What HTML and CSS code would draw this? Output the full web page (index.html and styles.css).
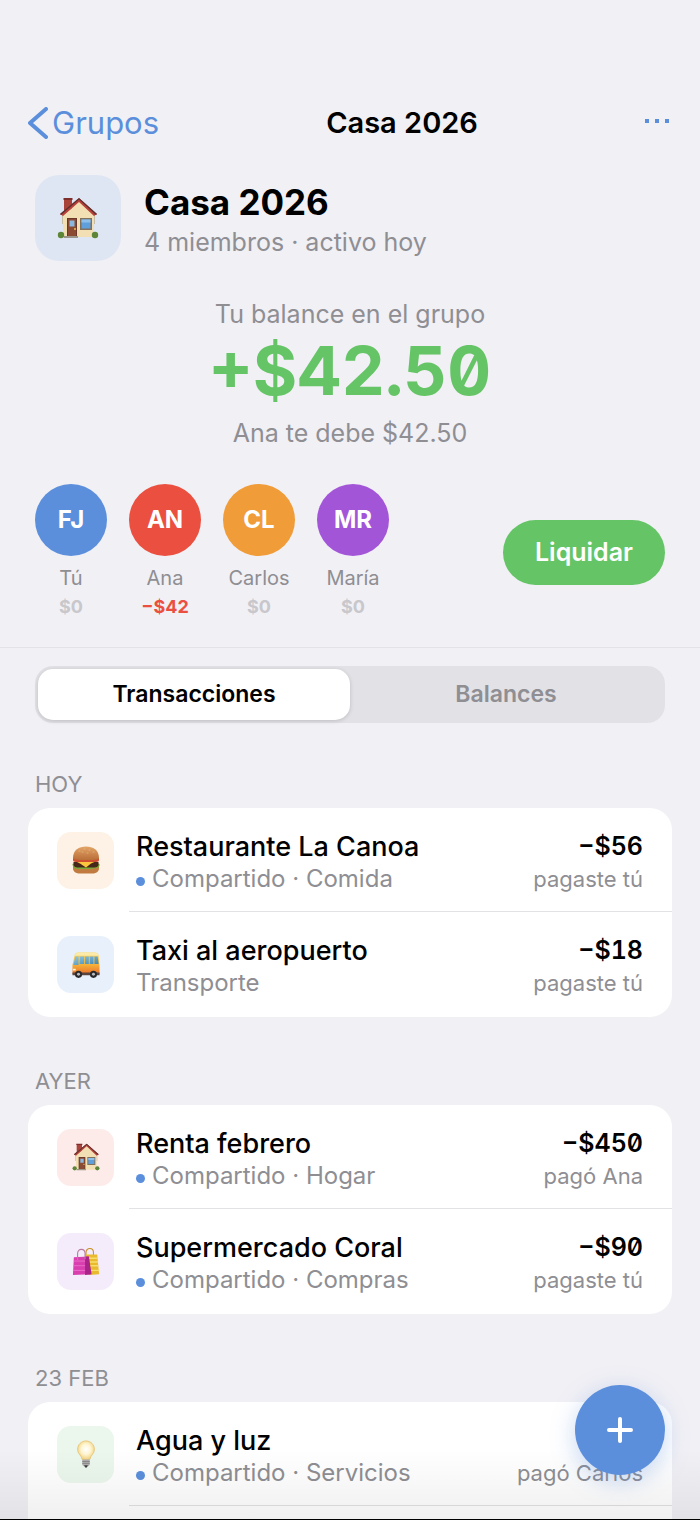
FILE: index.html
```
<!DOCTYPE html>
<html lang="es">
<head>
    <meta charset="utf-8">
    <meta name="viewport" content="width=device-width, initial-scale=1">
    <title>Casa 2026</title>
    <link rel="stylesheet" href="styles.css">
</head>
<body>
    <!-- Shared drawings -->
    <svg class="defs" aria-hidden="true">
        <defs>
            <linearGradient id="bun" x1="0" y1="0" x2="0" y2="1">
                <stop offset="0" stop-color="#e3a467"/>
                <stop offset="1" stop-color="#b96f38"/>
            </linearGradient>
            <linearGradient id="busBody" x1="0" y1="0" x2="0" y2="1">
                <stop offset="0" stop-color="#fbd75c"/>
                <stop offset="0.5" stop-color="#f8b93a"/>
                <stop offset="1" stop-color="#e9702c"/>
            </linearGradient>
            <linearGradient id="glass" x1="0" y1="0" x2="1" y2="1">
                <stop offset="0" stop-color="#8fc8e4"/>
                <stop offset="1" stop-color="#3f82ad"/>
            </linearGradient>
            <radialGradient id="bulbGlow" cx="0.5" cy="0.45" r="0.55">
                <stop offset="0" stop-color="#ffffff"/>
                <stop offset="0.5" stop-color="#fff6d4"/>
                <stop offset="1" stop-color="#f3d27c"/>
            </radialGradient>
            <symbol id="house" viewBox="0 0 42 42">
                <path d="M6 17 22 3l15 14v23H6z" fill="#f3dfb4"/>
                <path d="M6 18h-1v9h1zM37 18h1v9h-1z" fill="#c6bda8"/>
                <path d="M7 2h8v9l-8 6z" fill="#a8443a"/>
                <path d="M6.500 1h9v2h-9z" fill="#7e2f2b"/>
                <path d="M22 5 37 19l3-2L22 1 3 17l3 2z" fill="#b8403a"/>
                <path d="M22 1 3 17l1 1L22 2.500 39 18l1-1z" fill="#57312e"/>
                <path d="M10 21h10v19H10z" fill="#6b3728"/>
                <path d="M11 22h8v17h-8z" fill="#8a4a33"/>
                <path d="M12.500 23.500h5v6h-5z" fill="#8bb8df"/>
                <circle cx="18" cy="32" r="1" fill="#e8c25a"/>
                <path d="M23 21h12v12H23z" fill="#82715d"/>
                <path d="M24.500 22.500h9v9h-9z" fill="#5f9fdc"/>
                <path d="M24.500 22.500h9v3h-9z" fill="#8ebfea"/>
                <path d="M7 39h14v2H7z" fill="#9b9489"/>
                <circle cx="4" cy="38" r="3.200" fill="#5c8537"/>
                <circle cx="38" cy="38" r="3.200" fill="#5c8537"/>
            </symbol>
            <symbol id="burger" viewBox="0 0 28 28">
                <path d="M1 20h26v2c0 4-3 5.500-7 5.500H8C4 27.500 1 26 1 22z" fill="#c17b41"/>
                <path d="M0.500 18c2-1 4 0 6 1s4-1 7 0 5 0 8-1 5-1 6 0c.5 2-1 4-3 4-3 0-3 1-6 1s-5 0-9 0-7 0-8-2-1-2-1-3z" fill="#76a936"/>
                <path d="M1.500 16h25v2.500c0 2-2 3-4 3h-17c-2 0-4-1-4-3z" fill="#472719"/>
                <path d="M2 14.500h24l-7 3-5 4-6-4z" fill="#fbc63d"/>
                <path d="M1 12h26v2c0 1-1 2-3 2H4c-2 0-3-1-3-2z" fill="#cf4f32"/>
                <path d="M1 12C1 4 7 0.500 14 0.500S27 4 27 12c0 1.500-3 2-13 2S1 13.500 1 12z" fill="url(#bun)"/>
                <path d="M7 5h1M12 3h1M17 4h1M21 6h1M10 6h1M15 7h1" stroke="#eec38c" stroke-width="0.600" stroke-linecap="round"/>
            </symbol>
            <symbol id="bus" viewBox="0 0 30 28">
                <path d="M3 3c0-2 2-2.500 5-2.500h16c3 0 4.500 1 4.500 4L29.500 15v9H.5V14z" fill="url(#busBody)"/>
                <path d="M3 4c0-3 3-3.500 6-3.500h15c2 0 4.500 1 4.500 3.500z" fill="#fbeaa9"/>
                <path d="M3.500 5H7v9H1.500zM8.500 5H13v8H8zM14 5h4v8h-4zM19 5h4v8h-4zM24 5h3.500l1 8H24z" fill="url(#glass)"/>
                <path d="M.5 22h29v3H.5z" fill="#5a4440"/>
                <path d="M1 18h3v2H1z" fill="#fff4c8"/>
                <circle cx="7" cy="24" r="3.800" fill="#29292c"/>
                <circle cx="7" cy="24" r="1.600" fill="#b9bdc2"/>
                <circle cx="23" cy="24" r="3.800" fill="#29292c"/>
                <circle cx="23" cy="24" r="1.600" fill="#b9bdc2"/>
            </symbol>
            <symbol id="bags" viewBox="0 0 30 30">
                <path d="M15 9V5c0-6 8-6 8 0v4" fill="none" stroke="#c99731" stroke-width="1.200"/>
                <path d="M15 7h12l2 21-11 1z" fill="#e9b92e"/>
                <path d="M15 11h12M16 15h12M17 19h11M18 24h11" stroke="#f7de6b" stroke-width="1.500"/>
                <path d="M2 10l16-1 2 19-19 1z" fill="#d93fae"/>
                <path d="M14 9l4 0 3 19-7 1z" fill="#a82489"/>
                <path d="M2 14h12M2 19h12M1 24h13" stroke="#ec6fca"/>
                <path d="M6 13V6c0-6 8-6 8 0v6" fill="none" stroke="#bb7a9d" stroke-width="1.200"/>
            </symbol>
            <symbol id="bulb" viewBox="0 0 20 30">
                <path d="M10 1c5 0 9 4 9 9 0 5-4 6-5 11H6C5 16 1 15 1 10c0-5 4-9 9-9z" fill="url(#bulbGlow)" stroke="#e6c57a"/>
                <path d="M6 21h8v5c0 1-1 2-2 2H8c-1 0-2-1-2-2z" fill="#b0b0b0"/>
                <path d="M6 23h8M6 25h8" stroke="#848484"/>
                <path d="M8 27h4l-1 2.500H9z" fill="#3d3d3d"/>
            </symbol>
        </defs>
    </svg>

    <div class="app">
        <!-- Navigation -->
        <header class="nav">
            <a class="nav-back" href="#grupos">
                <svg class="chevron" viewBox="0 0 20 32" aria-hidden="true"><path d="M18 2 2 16l16 14"/></svg>Grupos
            </a>
            <span class="nav-title">Casa 2026</span>
            <button class="nav-more" type="button" aria-label="Más opciones">
                <svg viewBox="0 0 24 4" aria-hidden="true"><path d="M0 0h4v4H0zM10 0h4v4h-4zM20 0h4v4h-4z"/></svg>
            </button>
        </header>

        <!-- Group summary -->
        <section class="summary">
            <div class="group">
                <div class="group-icon"><svg><use href="#house"/></svg></div>
                <div>
                    <h1>Casa 2026</h1>
                    <p class="muted">4 miembros · activo hoy</p>
                </div>
            </div>

            <div class="balance">
                <p class="muted">Tu balance en el grupo</p>
                <p class="balance-amount">+$42.50</p>
                <p class="muted">Ana te debe $42.50</p>
            </div>

            <div class="members-row">
                <ul class="members">
                    <li><span class="avatar blue">FJ</span><span class="member-name">Tú</span><span class="member-amount">$0</span></li>
                    <li><span class="avatar red">AN</span><span class="member-name">Ana</span><span class="member-amount owes">−$42</span></li>
                    <li><span class="avatar orange">CL</span><span class="member-name">Carlos</span><span class="member-amount">$0</span></li>
                    <li><span class="avatar purple">MR</span><span class="member-name">María</span><span class="member-amount">$0</span></li>
                </ul>
                <button class="settle" type="button">Liquidar</button>
            </div>
        </section>

        <!-- Tabs -->
        <div class="tabs" role="tablist">
            <button class="tab active" type="button" role="tab" aria-selected="true">Transacciones</button>
            <button class="tab" type="button" role="tab" aria-selected="false">Balances</button>
        </div>

        <!-- Transactions by day -->
        <main class="days">
            <h2>HOY</h2>
            <ul class="card">
                <li class="row">
                    <span class="tile cream"><svg><use href="#burger"/></svg></span>
                    <div class="row-body">
                        <div class="info"><h3>Restaurante La Canoa</h3><p class="shared">Compartido · Comida</p></div>
                        <div class="cost"><p class="amount">−$56</p><p class="payer">pagaste tú</p></div>
                    </div>
                </li>
                <li class="row">
                    <span class="tile sky"><svg><use href="#bus"/></svg></span>
                    <div class="row-body">
                        <div class="info"><h3>Taxi al aeropuerto</h3><p>Transporte</p></div>
                        <div class="cost"><p class="amount">−$18</p><p class="payer">pagaste tú</p></div>
                    </div>
                </li>
            </ul>

            <h2>AYER</h2>
            <ul class="card">
                <li class="row">
                    <span class="tile rose"><svg><use href="#house"/></svg></span>
                    <div class="row-body">
                        <div class="info"><h3>Renta febrero</h3><p class="shared">Compartido · Hogar</p></div>
                        <div class="cost"><p class="amount">−$450</p><p class="payer">pagó Ana</p></div>
                    </div>
                </li>
                <li class="row">
                    <span class="tile lilac"><svg><use href="#bags"/></svg></span>
                    <div class="row-body">
                        <div class="info"><h3>Supermercado Coral</h3><p class="shared">Compartido · Compras</p></div>
                        <div class="cost"><p class="amount">−$90</p><p class="payer">pagaste tú</p></div>
                    </div>
                </li>
            </ul>

            <h2>23 FEB</h2>
            <ul class="card open">
                <li class="row">
                    <span class="tile mint"><svg><use href="#bulb"/></svg></span>
                    <div class="row-body">
                        <div class="info"><h3>Agua y luz</h3><p class="shared">Compartido · Servicios</p></div>
                        <div class="cost"><p class="amount"></p><p class="payer">pagó Carlos</p></div>
                    </div>
                </li>
            </ul>
        </main>

        <div class="fade"></div>
        <button class="add" type="button" aria-label="Añadir gasto">
            <svg viewBox="0 0 26 26" aria-hidden="true"><path d="M13 2v22M2 13h22"/></svg>
        </button>
    </div>
</body>
</html>
```
FILE: styles.css
```
* {
    box-sizing: border-box;
}

body {
    margin: 0;
    background-color: #f1f0f5;
    color: #000;
    font-family: "Inter", "Liberation Sans", sans-serif;
    font-size: 24px;
    line-height: 32px;
}

h1, h2, h3, p, ul {
    margin: 0;
    padding: 0;
}

ul {
    list-style: none;
}

button {
    border: 0;
    padding: 0;
    font: inherit;
    cursor: pointer;
}

.defs {
    position: absolute;
    width: 0;
    height: 0;
}

.app {
    position: relative;
    display: flex;
    flex-direction: column;
    height: 100vh;
    overflow: hidden;
    border-bottom: 1px solid #000;
}

/* Navigation */
.nav {
    display: flex;
    align-items: center;
    justify-content: space-between;
    flex-shrink: 0;
    padding: 98px 31px 27px 28px;
    line-height: 50px;
}

.nav-back {
    display: flex;
    align-items: center;
    gap: 4px;
    color: #5b8fdc;
    font-size: 31px;
    text-decoration: none;
}

.chevron {
    width: 20px;
    height: 32px;
    fill: none;
    stroke: #5b8fdc;
    stroke-width: 4;
    stroke-linecap: round;
    stroke-linejoin: round;
}

.nav-title {
    font-size: 29px;
    font-weight: 600;
}

.nav-more {
    display: flex;
    align-items: center;
    height: 44px;
    padding-bottom: 4px;
    background: none;
}

.nav-more svg {
    width: 24px;
    height: 4px;
    fill: #5b8fdc;
}

/* Summary */
.summary {
    flex-shrink: 0;
    padding: 0 35px 27px;
    border-bottom: 1px solid #e2e2e7;
}

.group {
    display: flex;
    align-items: center;
    gap: 23px;
}

.group-icon {
    display: flex;
    align-items: center;
    justify-content: center;
    width: 86px;
    height: 86px;
    border-radius: 24px;
    background-color: #dfe6f3;
}

.group-icon svg {
    width: 42px;
    height: 42px;
}

h1 {
    font-size: 35px;
    font-weight: 700;
    line-height: 48px;
}

.muted {
    color: #8e8e93;
    font-size: 25px;
}

.balance {
    padding: 37px 0 35px;
    text-align: center;
}

.balance-amount {
    margin-bottom: 6px;
    color: #65c466;
    font-size: 68px;
    font-weight: 700;
    font-variant-numeric: tabular-nums slashed-zero;
    line-height: 81px;
}

.members-row {
    display: flex;
    align-items: center;
    justify-content: space-between;
}

.members {
    display: flex;
    gap: 22px;
}

.members li {
    display: flex;
    flex-direction: column;
    align-items: center;
    width: 72px;
}

.avatar {
    width: 72px;
    height: 72px;
    margin-bottom: 6px;
    border-radius: 50%;
    color: #fff;
    font-weight: 700;
    line-height: 72px;
    text-align: center;
}

.blue {
    background-color: #5b8fdc;
}

.red {
    background-color: #ea4f3f;
}

.orange {
    background-color: #f09c38;
}

.purple {
    background-color: #a355d8;
}

.member-name {
    color: #8e8e93;
    font-size: 20px;
    line-height: 32px;
}

.member-amount {
    color: #c7c7cc;
    font-size: 18px;
    font-weight: 700;
    line-height: 26px;
}

.owes {
    color: #ea4f3f;
}

.settle {
    padding: 0 32px;
    border-radius: 33px;
    background-color: #65c466;
    color: #fff;
    font-size: 25px;
    font-weight: 600;
    line-height: 65px;
}

/* Tabs */
.tabs {
    display: flex;
    flex-shrink: 0;
    margin: 18px 35px 0;
    padding: 3px;
    border-radius: 18px;
    background-color: #e2e1e6;
}

.tab {
    flex: 1;
    border-radius: 15px;
    background: none;
    color: #8e8e93;
    font-size: 23px;
    font-weight: 600;
    line-height: 51px;
}

.tab.active {
    background-color: #fff;
    color: #000;
    box-shadow: 0 1px 4px rgba(0, 0, 0, 0.16);
}

/* Transactions */
.days {
    flex: 1;
    min-height: 0;
    overflow: hidden;
    padding: 0 28px;
}

h2 {
    padding: 48px 7px 8px;
    color: #8e8e93;
    font-size: 22px;
    font-weight: 400;
    line-height: 32px;
}

h2:first-child {
    padding-top: 45px;
}

.card {
    border-radius: 22px;
    background-color: #fff;
    overflow: hidden;
}

.card.open {
    padding-bottom: 40px;
}

.row {
    display: flex;
    align-items: center;
    padding-left: 29px;
}

.tile {
    display: flex;
    align-items: center;
    justify-content: center;
    width: 57px;
    height: 57px;
    margin-right: 15px;
    border-radius: 14px;
}

.tile svg {
    width: 28px;
    height: 28px;
}

.cream {
    background-color: #fdf2e5;
}

.sky {
    background-color: #e8f0fc;
}

.rose {
    background-color: #fdebea;
}

.lilac {
    background-color: #f4ecfb;
}

.mint {
    background-color: #ebf7ed;
}

.row-body {
    display: flex;
    flex: 1;
    justify-content: space-between;
    padding: 22px 29px 16px 7px;
    border-bottom: 1px solid #e2e2e5;
}

.card:not(.open) .row:last-child .row-body {
    padding-bottom: 18px;
    border-bottom: 0;
}

.info {
    color: #8e8e93;
}

h3 {
    color: #000;
    font-size: 27px;
    font-weight: 500;
    line-height: 33px;
}

.shared::before {
    content: "";
    display: inline-block;
    width: 9px;
    height: 9px;
    margin-right: 7px;
    border-radius: 50%;
    background-color: #5b8fdc;
    vertical-align: 1px;
}

.cost {
    color: #8e8e93;
    text-align: right;
}

.amount {
    min-height: 33px;
    color: #000;
    font-size: 25px;
    font-weight: 600;
    font-variant-numeric: tabular-nums slashed-zero;
    line-height: 33px;
}

.payer {
    font-size: 22px;
}

/* Bottom of the screen */
.fade {
    position: absolute;
    right: 0;
    bottom: 0;
    left: 0;
    height: 70px;
    background: linear-gradient(rgba(0, 0, 0, 0), rgba(0, 0, 0, 0.06));
    pointer-events: none;
}

.add {
    position: absolute;
    right: 35px;
    bottom: 44px;
    display: flex;
    align-items: center;
    justify-content: center;
    width: 90px;
    height: 90px;
    border-radius: 50%;
    background-color: #5b8fdc;
    box-shadow: 0 6px 24px rgba(91, 143, 220, 0.35);
}

.add svg {
    width: 26px;
    height: 26px;
    fill: none;
    stroke: #fff;
    stroke-width: 4;
    stroke-linecap: round;
}
```
